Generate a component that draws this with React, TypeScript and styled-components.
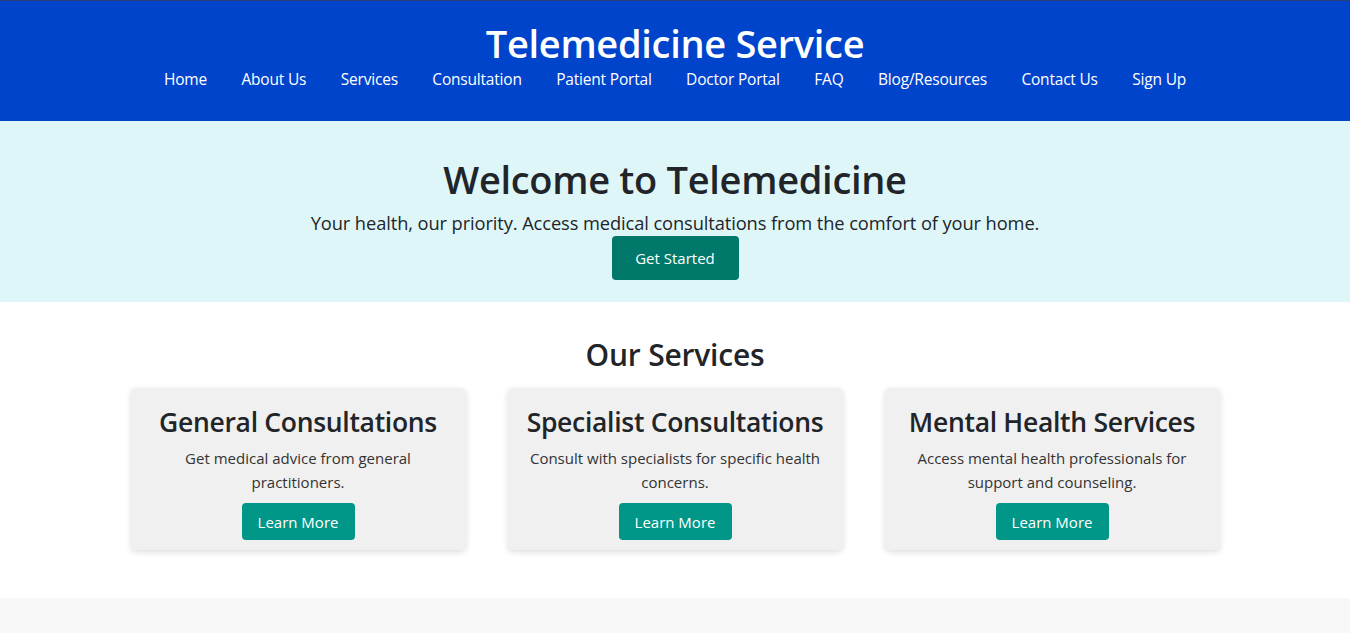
import React from "react";
import styled, { createGlobalStyle } from "styled-components";

const Global = createGlobalStyle`
  * { box-sizing: border-box; }
  html, body { margin: 0; padding: 0; background: #ffffff; }
  body {
    font-family: "Open Sans", "Noto Sans", sans-serif;
    color: #212529;
  }
`;

const Page = styled.div`
  display: flex;
  flex-direction: column;
  min-height: 633px;
  border-top: 1px solid #2d3f70;
`;

const Header = styled.header`
  background: #0044cc;
  height: 120px;
  display: flex;
  flex-direction: column;
  align-items: center;
  padding-top: 16px;
`;

const Title = styled.h1`
  margin: 0;
  color: #ffffff;
  font-size: 38px;
  font-weight: 600;
  line-height: 52px;
  letter-spacing: -0.3px;
`;

const Nav = styled.nav`
  display: flex;
  gap: 34.5px;
`;

const NavLink = styled.a`
  color: #ffffff;
  font-size: 15.5px;
  line-height: 21px;
  text-decoration: none;
  letter-spacing: -0.2px;
`;

const Hero = styled.section`
  background: #dff6f9;
  height: 181px;
  display: flex;
  flex-direction: column;
  align-items: center;
  padding-top: 28px;
`;

const HeroTitle = styled.h2`
  margin: 0;
  font-size: 38px;
  font-weight: 600;
  line-height: 60px;
  color: #212529;
  letter-spacing: -0.3px;
`;

const Lead = styled.p`
  margin: 0;
  font-size: 18.3px;
  line-height: 28px;
  color: #212529;
  letter-spacing: -0.1px;
`;

const PrimaryButton = styled.button`
  font-family: inherit;
  background: #00796b;
  color: #ffffff;
  border: none;
  border-radius: 4px;
  width: 127px;
  height: 44px;
  font-size: 15px;
  margin-top: -1px;
  cursor: pointer;
`;

const Services = styled.section`
  background: #ffffff;
  height: 296px;
  display: flex;
  flex-direction: column;
  align-items: center;
  padding-top: 33px;
`;

const SectionTitle = styled.h2`
  margin: 0;
  font-size: 30px;
  font-weight: 600;
  line-height: 40px;
  color: #212529;
  letter-spacing: -0.2px;
`;

const CardRow = styled.div`
  display: flex;
  justify-content: center;
  gap: 42px;
  margin-top: 13px;
`;

const Card = styled.div`
  width: 335px;
  height: 162px;
  background: #f0f0f0;
  border-radius: 5px;
  box-shadow: 0 2px 6px rgba(0, 0, 0, 0.14);
  display: flex;
  flex-direction: column;
  align-items: center;
  padding: 16px 14px 0;
  text-align: center;
`;

const CardTitle = styled.h3`
  margin: 0 0 6px;
  font-size: 26.5px;
  font-weight: 600;
  line-height: 36px;
  color: #212529;
  letter-spacing: -0.3px;
`;

const CardText = styled.p`
  margin: 0;
  font-size: 15px;
  line-height: 24px;
  color: #333333;
  max-width: 305px;
`;

const SmallButton = styled.button`
  font-family: inherit;
  background: #009688;
  color: #ffffff;
  border: none;
  border-radius: 4px;
  width: 113px;
  height: 37px;
  font-size: 15px;
  margin-top: 9px;
  cursor: pointer;
`;

const Footer = styled.footer`
  flex: 1;
  background: #f8f8f8;
`;

const navItems = [
  "Home",
  "About Us",
  "Services",
  "Consultation",
  "Patient Portal",
  "Doctor Portal",
  "FAQ",
  "Blog/Resources",
  "Contact Us",
  "Sign Up",
];

const services = [
  {
    title: "General Consultations",
    text: "Get medical advice from general practitioners.",
  },
  {
    title: "Specialist Consultations",
    text: "Consult with specialists for specific health concerns.",
  },
  {
    title: "Mental Health Services",
    text: "Access mental health professionals for support and counseling.",
  },
];

export default function App() {
  return (
    <>
      <Global />
      <Page>
        <Header>
          <Title>Telemedicine Service</Title>
          <Nav>
            {navItems.map((n) => (
              <NavLink key={n} href="#">
                {n}
              </NavLink>
            ))}
          </Nav>
        </Header>
        <Hero>
          <HeroTitle>Welcome to Telemedicine</HeroTitle>
          <Lead>
            Your health, our priority. Access medical consultations from the
            comfort of your home.
          </Lead>
          <PrimaryButton>Get Started</PrimaryButton>
        </Hero>
        <Services>
          <SectionTitle>Our Services</SectionTitle>
          <CardRow>
            {services.map((s) => (
              <Card key={s.title}>
                <CardTitle>{s.title}</CardTitle>
                <CardText>{s.text}</CardText>
                <SmallButton>Learn More</SmallButton>
              </Card>
            ))}
          </CardRow>
        </Services>
        <Footer />
      </Page>
    </>
  );
}
